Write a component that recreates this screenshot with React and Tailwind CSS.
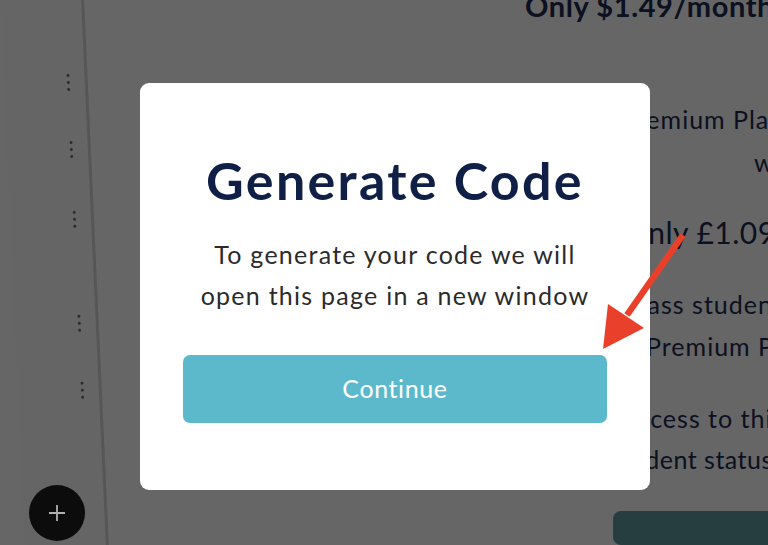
import React from "react";

function Dots() {
  return (
    <div className="flex flex-col items-center gap-[4px]">
      <span className="block w-[3px] h-[3px] rounded-full bg-[#6e6e6e]" />
      <span className="block w-[3px] h-[3px] rounded-full bg-[#6e6e6e]" />
      <span className="block w-[3px] h-[3px] rounded-full bg-[#6e6e6e]" />
    </div>
  );
}

export default function App() {
  return (
    <div className="relative w-[768px] h-[545px] overflow-hidden bg-white font-['Lato',sans-serif]">
      <div className="flex h-full">
        <aside className="w-[84px] shrink-0 h-[620px] bg-[#fcfcfc] border-r-[3px] border-[#d8d8d8] origin-top-left -rotate-[2.6deg] flex flex-col pl-[48px]">
          <div className="mt-[77px]"><Dots /></div>
          <div className="mt-[50px]"><Dots /></div>
          <div className="mt-[53px]"><Dots /></div>
          <div className="mt-[87px]"><Dots /></div>
          <div className="mt-[50px]"><Dots /></div>
        </aside>
        <main className="flex-1 flex flex-col text-[#1c2b52] whitespace-nowrap">
          <div className="mt-[-9px] ml-[441px] text-[29px] leading-[29px] font-bold tracking-[0.6px]">Only $1.49/month</div>
          <div className="mt-[78px] ml-[537px] text-[25px] leading-[42px] tracking-[1px]">Premium Plan</div>
          <div className="mt-[1px] ml-[670px] text-[25px] leading-[42px] tracking-[1px]">with</div>
          <div className="mt-[28px] ml-[540px] text-[30px] leading-[42px] tracking-[0.5px]">Only £1.09/month</div>
          <div className="mt-[30px] ml-[539px] text-[25px] leading-[42px] tracking-[1px]">Class students</div>
          <div className="ml-[562px] text-[25px] leading-[42px] tracking-[1px]">Premium Plan</div>
          <div className="mt-[30px] ml-[540px] text-[25px] leading-[42px] tracking-[1px]">access to this</div>
          <div className="mt-[-1px] ml-[526px] text-[25px] leading-[42px] tracking-[0.5px]">student status</div>
          <div className="mt-[31px] ml-[529px] w-[300px] h-[70px] rounded-[8px] bg-[#5f9ba0]" />
        </main>
      </div>

      <div className="absolute inset-0 bg-black/60 pl-[140px] pt-[83px]">
        <div className="w-[510px] h-[407px] bg-white rounded-[9px] flex flex-col items-center pt-[71px]">
          <h1 className="text-[52px] leading-[52px] font-bold text-[#0f1f45] tracking-[2.3px] whitespace-nowrap">Generate Code</h1>
          <p className="mt-[28px] text-[25px] leading-[41px] text-[#2b2b2b] text-center tracking-[1.25px] whitespace-nowrap">
            To generate your code we will
            <br />
            open this page in a new window
          </p>
          <button className="mt-[39px] w-[424px] h-[68px] rounded-[7px] bg-[#5bb9cb] text-white text-[25px] tracking-[0.6px] flex items-center justify-center">
            Continue
          </button>
        </div>
      </div>

      <div className="absolute left-[29px] top-[485px] w-[56px] h-[56px] rounded-full bg-[#0c0c0c] flex items-center justify-center">
        <svg width="20" height="20" viewBox="0 0 20 20">
          <path d="M10 2v16M2 10h16" stroke="#b0b0b0" strokeWidth="1.8" />
        </svg>
      </div>

      <svg className="absolute left-0 top-0 pointer-events-none" width="768" height="545">
        <line x1="683" y1="235" x2="627" y2="315" stroke="#e8402a" strokeWidth="6.5" />
        <polygon points="603,349 608,304 644,328" fill="#e8402a" />
      </svg>
    </div>
  );
}
